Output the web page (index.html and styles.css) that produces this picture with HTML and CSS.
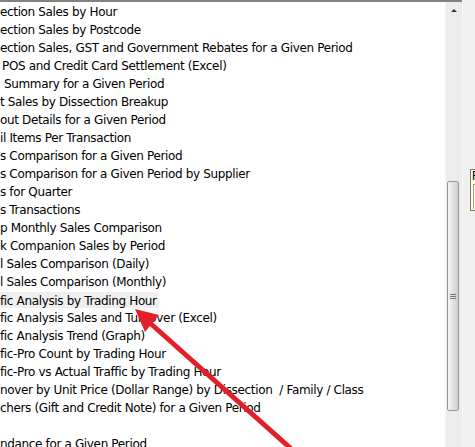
FILE: index.html
```html
<!DOCTYPE html>
<html>
<head>
<meta charset="utf-8">
<link rel="stylesheet" href="styles.css">
</head>
<body>
<div class="window">
  <div class="listbox">
    <ul class="list">
      <li>ection Sales by Hour</li>
      <li>ection Sales by Postcode</li>
      <li>ection Sales, GST and Government Rebates for a Given Period</li>
      <li class="in2">POS and Credit Card Settlement (Excel)</li>
      <li class="in4">Summary for a Given Period</li>
      <li>t Sales by Dissection Breakup</li>
      <li>out Details for a Given Period</li>
      <li>il Items Per Transaction</li>
      <li>s Comparison for a Given Period</li>
      <li>s Comparison for a Given Period by Supplier</li>
      <li>s for Quarter</li>
      <li>s Transactions</li>
      <li>p Monthly Sales Comparison</li>
      <li>k Companion Sales by Period</li>
      <li>l Sales Comparison (Daily)</li>
      <li>l Sales Comparison (Monthly)</li>
      <li><span class="hover">fic Analysis by Trading Hour</span></li>
      <li>fic Analysis Sales and Turnover (Excel)</li>
      <li>fic Analysis Trend (Graph)</li>
      <li>fic-Pro Count by Trading Hour</li>
      <li>fic-Pro vs Actual Traffic by Trading Hour</li>
      <li>nover by Unit Price (Dollar Range) by Dissection  / Family / Class</li>
      <li>chers (Gift and Credit Note) for a Given Period</li>
      <li>&nbsp;</li>
      <li>ndance for a Given Period</li>
    </ul>
    <div class="scrollbar">
      <div class="up"><span class="tri"></span></div>
      <div class="track">
        <div class="thumb"><span class="grip"></span></div>
      </div>
    </div>
  </div>
  <div class="side">
    <div class="tip"><span class="tip-text">F</span><div class="tip-inner"></div></div>
  </div>
</div>
<svg class="arrow" width="475" height="447" viewBox="0 0 475 447">
  <line x1="150" y1="323" x2="297" y2="454" stroke="#e3202a" stroke-width="5"/>
  <polygon points="135,309 159,315 145,332" fill="#e3202a"/>
</svg>
</body>
</html>
```
FILE: styles.css
```css
html, body {
  margin: 0;
  padding: 0;
  background: #f0f0f0;
  overflow: hidden;
}
.window {
  width: 475px;
  height: 447px;
  display: flex;
  font-family: "DejaVu Sans", Tahoma, sans-serif;
  font-size: 12px;
  letter-spacing: -0.35px;
  color: #000;
}
.listbox {
  width: 462px;
  height: 447px;
  box-sizing: border-box;
  border-top: 2px solid #828282;
  background: #fff;
  display: flex;
  overflow: hidden;
}
.list {
  list-style: none;
  margin: 0;
  padding: 1px 0 0;
  flex: 1;
  min-width: 0;
  overflow: hidden;
}
.list li {
  height: 18px;
  line-height: 18px;
  white-space: pre;
}
.list li.in2 { padding-left: 2px; }
.list li.in4 { padding-left: 4px; }
.hover {
  background: #efefef;
  display: inline-block;
  height: 16px;
  line-height: 18px;
  padding-right: 2px;
  vertical-align: top;
  margin-top: 1px;
  overflow: visible;
}
.scrollbar {
  width: 16px;
  background: #ececec;
  border-left: 1px solid #f6f6f6;
  display: flex;
  flex-direction: column;
}
.up {
  height: 17px;
  display: flex;
  justify-content: center;
  align-items: center;
}
.tri {
  width: 0;
  height: 0;
  border-left: 3px solid transparent;
  border-right: 3px solid transparent;
  border-bottom: 3px solid #333;
}
.track {
  flex: 1;
  padding-top: 162px;
}
.thumb {
  margin-left: 1px;
  width: 12px;
  height: 230px;
  box-sizing: border-box;
  border: 1px solid #989898;
  border-radius: 2px;
  background: linear-gradient(to right, #f4f4f4, #e2e2e2 50%, #cfcfcf);
  display: flex;
  align-items: center;
  justify-content: center;
}
.grip {
  width: 6px;
  height: 5px;
  background: repeating-linear-gradient(to bottom, #777 0 1px, transparent 1px 2px);
}
.side {
  flex: 1;
  background: #f0f0f0;
  border-left: 1px solid #fafafa;
  overflow: hidden;
  padding-top: 169px;
  padding-left: 7px;
}
.tip {
  width: 30px;
  height: 42px;
  box-sizing: border-box;
  border: 1px solid #777;
  background: #ffffe1;
  padding-left: 1px;
}
.tip-text {
  display: block;
  font-family: "Liberation Sans", sans-serif;
  font-size: 12px;
  line-height: 13px;
}
.tip-inner {
  margin-top: 1px;
  height: 24px;
  border-left: 1px solid #999;
  border-top: 1px solid #999;
  margin-left: 1px;
}
.arrow {
  position: absolute;
  left: 0;
  top: 0;
  pointer-events: none;
}
```
